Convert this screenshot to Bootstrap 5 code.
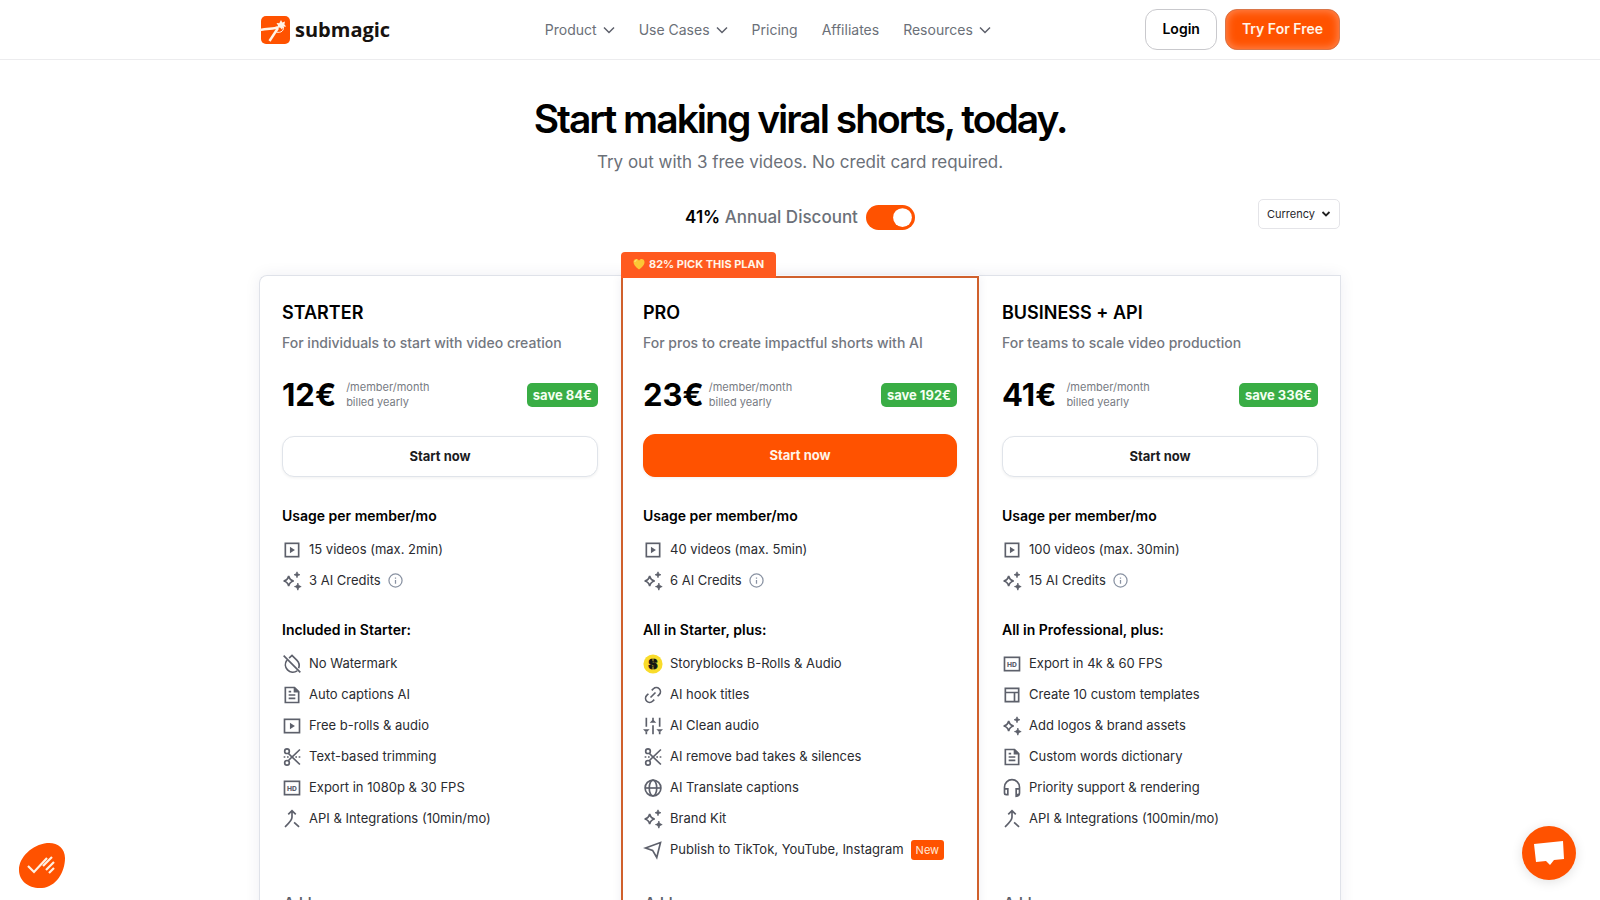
<!DOCTYPE html>
<html lang="en">
<head>
<meta charset="utf-8">
<meta name="viewport" content="width=device-width, initial-scale=1">
<title>Submagic pricing</title>
<link href="https://cdn.jsdelivr.net/npm/bootstrap@5.3.0/dist/css/bootstrap.min.css" rel="stylesheet">
<style>
  :root { --brand: #ff5200; --muted: #6b7078; }
  body { font-family: Inter, "Liberation Sans", sans-serif; color: #000; background: #fff; font-size: 14px; }
  .wrap { max-width: 1082px; margin-inline: auto; padding-inline: 1px; }
  .site-nav { border-bottom: 1px solid #ececee; padding: 9px 0; }
  .brand-name { font-family: "Open Sans", sans-serif; font-weight: 700; font-size: 20px; line-height: 28px; color: #17120f; }
  .nav-item-btn { border: 0; background: none; padding: 0; color: var(--muted); font-weight: 400; font-size: 14px; line-height: 20px; text-decoration: none; display: inline-flex; align-items: center; gap: 6px; }
  .btn-pill { --bs-btn-font-size: 14px; --bs-btn-font-weight: 600; --bs-btn-line-height: 20px; --bs-btn-border-radius: 12px; --bs-btn-padding-x: 16px; height: 41px; padding-block: 9px 10px; }
  .btn-login { --bs-btn-color: #000; --bs-btn-border-color: #c9c9cd; --bs-btn-bg: #fff; }
  .btn-try { --bs-btn-color: #fff4e8; --bs-btn-bg: var(--brand); --bs-btn-border-color: #d9764a; box-shadow: inset 0 0 8px 1px #ff8a55; }
  .hero { padding-top: 35px; }
  .hero-title { font-size: 39px; line-height: 48px; font-weight: 600; letter-spacing: -2px; }
  .hero-sub { font-size: 17px; line-height: 24px; color: var(--muted); padding-top: 7px; }
  .controls { padding-top: 25px; }
  .billing { font-size: 17px; line-height: 26px; font-weight: 500; color: var(--muted); padding-top: 5px; }
  .billing b { font-weight: 600; color: #000; }
  .form-switch .bill-toggle { width: 49px; height: 25px; margin: 0; border: 0; background-color: var(--brand); background-size: 25px; }
  .form-switch .bill-toggle:checked { background-color: var(--brand); }
  .currency { width: 82px; height: 30px; font-size: 11px; line-height: 16px; color: #26262b; border: 1px solid #e4e4e8; border-radius: 5px; padding: 0 8px; appearance: none;
    background: #fff url("data:image/svg+xml,%3Csvg xmlns='http://www.w3.org/2000/svg' viewBox='0 0 10 10' fill='none' stroke='%23222' stroke-width='1.8'%3E%3Cpath d='M1.500 3l3.500 3.500L8.500 3'/%3E%3C/svg%3E") no-repeat right 8px center / 10px; }
  .plans { display: grid; grid-template-columns: 181fr 179fr 181fr; box-shadow: 0 0 16px rgba(30, 30, 80, .07); border-radius: 8px 0 0 0; margin: 45px -1px 0; }
  .plan { border: 1px solid #dfe2e9; padding: 25px 22px 40px; background: #fff; }
  .plan-first { border-right: 0; border-radius: 8px 0 0 0; padding-right: 23px; }
  .plan-last { border-left: 0; padding-left: 23px; }
  .plan-pro { position: relative; border: 2px solid #d0602c; margin-top: 1px; padding: 23px 20px 40px; box-shadow: 0 0 10px rgba(30, 30, 80, .07); }
  .pick-tag { position: absolute; left: -2px; bottom: 100%; height: 26px; padding: 0 12px 2px; background: #ff5a1f; color: #fff4e8; font-size: 11px; font-weight: 700; border-radius: 4px 4px 0 0; }
  .plan-name { font-size: 18px; line-height: 24px; font-weight: 600; margin: 0 0 7px; }
  .plan-desc { font-size: 14px; line-height: 22px; font-weight: 500; color: #73777f; margin: 0 0 21px; }
  .price { font-size: 31px; line-height: 40px; font-weight: 700; }
  .per { font-size: 11px; line-height: 15px; color: #777b83; margin-left: 10px; }
  .plan-pro .per { margin-left: 5px; }
  .save-tag { background: #39ad45; color: #f4fff2; font-size: 13px; line-height: 24px; font-weight: 700; border-radius: 5px; padding: 0 6px; }
  .btn-start { --bs-btn-font-size: 13px; --bs-btn-font-weight: 700; --bs-btn-border-color: #e0e4ea; --bs-btn-color: #1c1c1f; --bs-btn-bg: #fff; margin: 21px 0 29px; box-shadow: 0 1px 3px rgba(0, 0, 0, .06); }
  .btn-start-pro { --bs-btn-border-color: var(--brand); --bs-btn-color: #fff4e8; --bs-btn-bg: var(--brand); height: 43px; margin-top: 19px; }
  .group-title { font-size: 14px; line-height: 20px; font-weight: 600; margin: 0 0 8px; }
  .features { list-style: none; padding: 0; margin: 0 0 24px; font-size: 13px; line-height: 31px; color: #2a2b30; }
  .features li { display: flex; align-items: center; gap: 7px; height: 31px; }
  .features-main { min-height: 224px; margin: 0 0 21px; }
  .ico { width: 20px; height: 20px; flex: none; fill: none; stroke: #5d606b; stroke-width: 2; }
  .ico-info { width: 15px; height: 15px; stroke: #8a93a3; stroke-width: 2; }
  .ico-chev { width: 12px; height: 12px; fill: none; stroke: #5d606b; stroke-width: 1.5; }
  .new-tag { background: var(--brand); color: #ffe9d8; font-size: 11px; line-height: 20px; border-radius: 3px; padding: 0 5px; }
  .addons { font-size: 14px; line-height: 20px; font-weight: 600; color: #5d606b; margin: 0; padding-left: 2px; }
  .float-btn { position: fixed; border: 0; padding: 0; background: none; line-height: 0; }
  .chat-btn { right: 24px; bottom: 20px; width: 54px; height: 54px; border-radius: 50%; background: var(--brand); box-shadow: 0 2px 12px rgba(0, 0, 0, .12); }
  .cookie-btn { left: 17px; bottom: 10px; }
</style>
</head>
<body>
<svg class="d-none" aria-hidden="true">
  <symbol id="i-chev" viewBox="0 0 12 12"><path d="M1 3.500l5 5 5-5"/></symbol>
  <symbol id="i-play" viewBox="0 0 24 24"><rect x="4" y="4" width="16" height="16"/><path d="M9.500 8l6 4-6 4z" fill="#5d606b" stroke="none"/></symbol>
  <symbol id="i-film" viewBox="0 0 24 24"><rect x="3" y="4" width="18" height="16"/><path d="M9.500 8l6 4-6 4z" fill="#5d606b" stroke="none"/></symbol>
  <symbol id="i-spark" viewBox="0 0 24 24"><path d="M8 6c.8 3.700 2.300 5.200 6 6-3.700.8-5.200 2.300-6 6-.8-3.700-2.300-5.200-6-6 3.700-.8 5.200-2.300 6-6z"/><path d="M18 1c.5 2.200 1.300 3 3.500 3.500C19.300 5 18.500 5.800 18 8c-.5-2.200-1.300-3-3.500-3.500C16.700 4 17.500 3.200 18 1zM19 14.500c.6 2.700 1.600 3.700 4 4.200-2.400.6-3.400 1.600-4 4.300-.6-2.700-1.600-3.700-4-4.300 2.400-.5 3.400-1.500 4-4.200z" fill="#5d606b" stroke-width="1"/></symbol>
  <symbol id="i-info" viewBox="0 0 24 24"><circle cx="12" cy="12" r="10.500"/><path d="M12 11v6M12 7v2"/></symbol>
  <symbol id="i-nodrop" viewBox="0 0 24 24"><path d="M2 2l20 20M5.800 7.500a9 9 0 0 0 12.400 12.700M8.500 5L12 1.800l6 5.900a9 9 0 0 1 2 9.300"/></symbol>
  <symbol id="i-doc" viewBox="0 0 24 24"><path d="M4 3h11l5 5v13H4zM8 8h3M8 12h8M8 16h8"/><path d="M14 2v7h7z" fill="#5d606b" stroke="none"/></symbol>
  <symbol id="i-cut" viewBox="0 0 24 24"><circle cx="6" cy="5" r="2.800"/><circle cx="6" cy="19" r="2.800"/><path d="M7.500 7.500l4.500 4.500L21.500 3M7.500 16.500L12 12l9.500 9"/><path d="M2 12h2M6 12h2M16 12h2M20 12h2"/></symbol>
  <symbol id="i-hd" viewBox="0 0 24 24"><rect x="3" y="4" width="18" height="16"/><text x="12" y="15" text-anchor="middle" font-family="Inter, sans-serif" font-size="8" font-weight="800" fill="#5d606b" stroke="none">HD</text></symbol>
  <symbol id="i-merge" viewBox="0 0 24 24"><path d="M12 2.500V10c0 4-3.500 7-8.500 11.500M7.500 6.500L12 2l4.500 4.500M14.500 16l6 5.500"/></symbol>
  <symbol id="i-story" viewBox="0 0 24 24"><circle cx="12" cy="12" r="11.500" fill="#f9dc2b" stroke="none"/><text x="12" y="18" text-anchor="middle" font-family="Inter, sans-serif" font-size="16" font-weight="900" fill="#141414" stroke="#141414" stroke-width="1">S</text><path d="M12 4v4.500M12 15.500v5" stroke="#f9dc2b" stroke-width="1"/></symbol>
  <symbol id="i-link" viewBox="0 0 24 24"><path d="M9 15l6-6M10.500 6.500l2-2a4.950 4.950 0 0 1 7 7l-2 2M13.500 17.500l-2 2a4.950 4.950 0 0 1-7-7l2-2"/></symbol>
  <symbol id="i-mix" viewBox="0 0 24 24"><path d="M4 2v11M4 19v3M12 2v5M12 11v11M20 2v11M20 19v3"/><path d="M0 16h8l-3 3H3zM16 16h8l-3 3h-2zM8 8h8l-3-3h-2z" fill="#5d606b" stroke="none"/></symbol>
  <symbol id="i-globe" viewBox="0 0 24 24"><circle cx="12" cy="12" r="9.500"/><ellipse cx="12" cy="12" rx="4.500" ry="9.500"/><path d="M2.500 12h19"/></symbol>
  <symbol id="i-send" viewBox="0 0 24 24"><path d="M3 9.500L21 3l-4.500 18-5-8.500z"/></symbol>
  <symbol id="i-layout" viewBox="0 0 24 24"><path d="M4 4h16v16H4zM4 9h16M15 9v11"/></symbol>
  <symbol id="i-head" viewBox="0 0 24 24"><path d="M3 14v-3a9 9 0 0 1 18 0v7c0 2.500-1.500 4-5 4M3 13h4v7H5a2 2 0 0 1-2-2zM21 13h-4v7h2a2 2 0 0 0 2-2z"/></symbol>
</svg>

<header class="site-nav">
  <div class="wrap d-flex justify-content-between align-items-center">
    <a href="#" class="d-flex align-items-center gap-1 text-decoration-none">
      <svg width="31" height="30" viewBox="0 0 31 30" aria-hidden="true"><rect x="1" y="1" width="29" height="28" rx="5" fill="#ff5200"/><path d="M0 15c8-2 14-.5 18-3" stroke="#fff4e8" stroke-width="2.400" fill="none"/><path d="M9.500 26L18 13" stroke="#fff4e8" stroke-width="2.400"/><path d="M21 5l1.300 2.500 2.700-1-.6 2.900 1.800 2-2.800.4L22 14.500l-2-2-2.900.5.900-2.600L16.500 8l2.800.2z" fill="#fff4e8"/><path d="M15 16.500c4 2 9 .5 8.500-4.500" stroke="#fff4e8" fill="none"/></svg>
      <span class="brand-name">submagic</span>
    </a>
    <nav class="d-flex align-items-center gap-4" aria-label="Main">
      <button type="button" class="nav-item-btn">Product <svg class="ico-chev"><use href="#i-chev"/></svg></button>
      <button type="button" class="nav-item-btn">Use Cases <svg class="ico-chev"><use href="#i-chev"/></svg></button>
      <a href="#" class="nav-item-btn">Pricing</a>
      <a href="#" class="nav-item-btn">Affiliates</a>
      <button type="button" class="nav-item-btn">Resources <svg class="ico-chev"><use href="#i-chev"/></svg></button>
    </nav>
    <div class="d-flex gap-2">
      <button type="button" class="btn btn-pill btn-login">Login</button>
      <button type="button" class="btn btn-pill btn-try">Try For Free</button>
    </div>
  </div>
</header>

<main class="wrap">
  <div class="hero text-center">
    <h1 class="hero-title mb-0">Start making viral shorts, today.</h1>
    <p class="hero-sub mb-0">Try out with 3 free videos. No credit card required.</p>
  </div>
  <div class="controls row g-0">
    <div class="col"></div>
    <div class="col-auto form-switch billing d-flex align-items-center gap-2 ps-0">
      <label for="annual"><b>41%</b> Annual Discount</label>
      <input class="form-check-input bill-toggle float-none" type="checkbox" role="switch" id="annual" checked>
    </div>
    <div class="col text-end">
      <select class="currency" aria-label="Currency"><option>Currency</option><option>EUR</option><option>USD</option></select>
    </div>
  </div>

  <div class="plans">
    <section class="plan plan-first">
      <h2 class="plan-name">STARTER</h2>
      <p class="plan-desc">For individuals to start with video creation</p>
      <div class="d-flex align-items-center">
        <span class="price">12€</span>
        <span class="per">/member/month<br>billed yearly</span>
        <span class="save-tag ms-auto">save 84€</span>
      </div>
      <button type="button" class="btn btn-pill btn-start w-100">Start now</button>
      <h3 class="group-title">Usage per member/mo</h3>
      <ul class="features">
        <li><svg class="ico"><use href="#i-play"/></svg>15 videos (max. 2min)</li>
        <li><svg class="ico"><use href="#i-spark"/></svg>3 AI Credits<svg class="ico ico-info"><use href="#i-info"/></svg></li>
      </ul>
      <h3 class="group-title">Included in Starter:</h3>
      <ul class="features features-main">
        <li><svg class="ico"><use href="#i-nodrop"/></svg>No Watermark</li>
        <li><svg class="ico"><use href="#i-doc"/></svg>Auto captions AI</li>
        <li><svg class="ico"><use href="#i-film"/></svg>Free b-rolls &amp; audio</li>
        <li><svg class="ico"><use href="#i-cut"/></svg>Text-based trimming</li>
        <li><svg class="ico"><use href="#i-hd"/></svg>Export in 1080p &amp; 30 FPS</li>
        <li><svg class="ico"><use href="#i-merge"/></svg>API &amp; Integrations (10min/mo)</li>
      </ul>
      <p class="addons">Add-ons</p>
    </section>

    <section class="plan plan-pro">
      <div class="pick-tag d-flex align-items-center gap-1">
        <svg width="12" height="12" viewBox="0 0 12 12" aria-hidden="true"><path d="M6 11.500C2 8.500.5 6.500.5 4 .5.500 4.800 0 6 2.800 7.200 0 11.500.500 11.500 4c0 2.500-1.500 4.500-5.500 7.500z" fill="#fcc736"/><path d="M2 4c0-1.200.8-2 1.800-2" stroke="#ffe88a" fill="none"/></svg>
        82% PICK THIS PLAN
      </div>
      <h2 class="plan-name">PRO</h2>
      <p class="plan-desc">For pros to create impactful shorts with AI</p>
      <div class="d-flex align-items-center">
        <span class="price">23€</span>
        <span class="per">/member/month<br>billed yearly</span>
        <span class="save-tag ms-auto">save 192€</span>
      </div>
      <button type="button" class="btn btn-pill btn-start btn-start-pro w-100">Start now</button>
      <h3 class="group-title">Usage per member/mo</h3>
      <ul class="features">
        <li><svg class="ico"><use href="#i-play"/></svg>40 videos (max. 5min)</li>
        <li><svg class="ico"><use href="#i-spark"/></svg>6 AI Credits<svg class="ico ico-info"><use href="#i-info"/></svg></li>
      </ul>
      <h3 class="group-title">All in Starter, plus:</h3>
      <ul class="features features-main">
        <li><svg class="ico"><use href="#i-story"/></svg>Storyblocks B-Rolls &amp; Audio</li>
        <li><svg class="ico"><use href="#i-link"/></svg>AI hook titles</li>
        <li><svg class="ico"><use href="#i-mix"/></svg>AI Clean audio</li>
        <li><svg class="ico"><use href="#i-cut"/></svg>AI remove bad takes &amp; silences</li>
        <li><svg class="ico"><use href="#i-globe"/></svg>AI Translate captions</li>
        <li><svg class="ico"><use href="#i-spark"/></svg>Brand Kit</li>
        <li><svg class="ico"><use href="#i-send"/></svg>Publish to TikTok, YouTube, Instagram<span class="new-tag">New</span></li>
      </ul>
      <p class="addons">Add-ons</p>
    </section>

    <section class="plan plan-last">
      <h2 class="plan-name">BUSINESS + API</h2>
      <p class="plan-desc">For teams to scale video production</p>
      <div class="d-flex align-items-center">
        <span class="price">41€</span>
        <span class="per">/member/month<br>billed yearly</span>
        <span class="save-tag ms-auto">save 336€</span>
      </div>
      <button type="button" class="btn btn-pill btn-start w-100">Start now</button>
      <h3 class="group-title">Usage per member/mo</h3>
      <ul class="features">
        <li><svg class="ico"><use href="#i-play"/></svg>100 videos (max. 30min)</li>
        <li><svg class="ico"><use href="#i-spark"/></svg>15 AI Credits<svg class="ico ico-info"><use href="#i-info"/></svg></li>
      </ul>
      <h3 class="group-title">All in Professional, plus:</h3>
      <ul class="features features-main">
        <li><svg class="ico"><use href="#i-hd"/></svg>Export in 4k &amp; 60 FPS</li>
        <li><svg class="ico"><use href="#i-layout"/></svg>Create 10 custom templates</li>
        <li><svg class="ico"><use href="#i-spark"/></svg>Add logos &amp; brand assets</li>
        <li><svg class="ico"><use href="#i-doc"/></svg>Custom words dictionary</li>
        <li><svg class="ico"><use href="#i-head"/></svg>Priority support &amp; rendering</li>
        <li><svg class="ico"><use href="#i-merge"/></svg>API &amp; Integrations (100min/mo)</li>
      </ul>
      <p class="addons">Add-ons</p>
    </section>
  </div>
</main>

<button type="button" class="float-btn cookie-btn" aria-label="Cookie preferences">
  <svg width="50" height="48" viewBox="0 0 50 48"><path d="M30 1c10-1 18 5 18 15 0 14-9 29-23 30C12 47 2 39 2 28 2 15 15 3 30 1z" fill="#ff5200"/><path d="M11 24l6 6 13-14M26 24l9-9M29 28l8-8M32 31l5-5" stroke="#fff1e2" stroke-width="2.200" fill="none"/></svg>
</button>
<button type="button" class="float-btn chat-btn" aria-label="Open chat">
  <svg width="54" height="54" viewBox="0 0 54 54"><path d="M12 18l29-3 1 18-10 1-4 5-4-4-10 1z" fill="#fff"/></svg>
</button>
<script src="https://cdn.jsdelivr.net/npm/bootstrap@5.3.0/dist/js/bootstrap.bundle.min.js"></script>
</body>
</html>
